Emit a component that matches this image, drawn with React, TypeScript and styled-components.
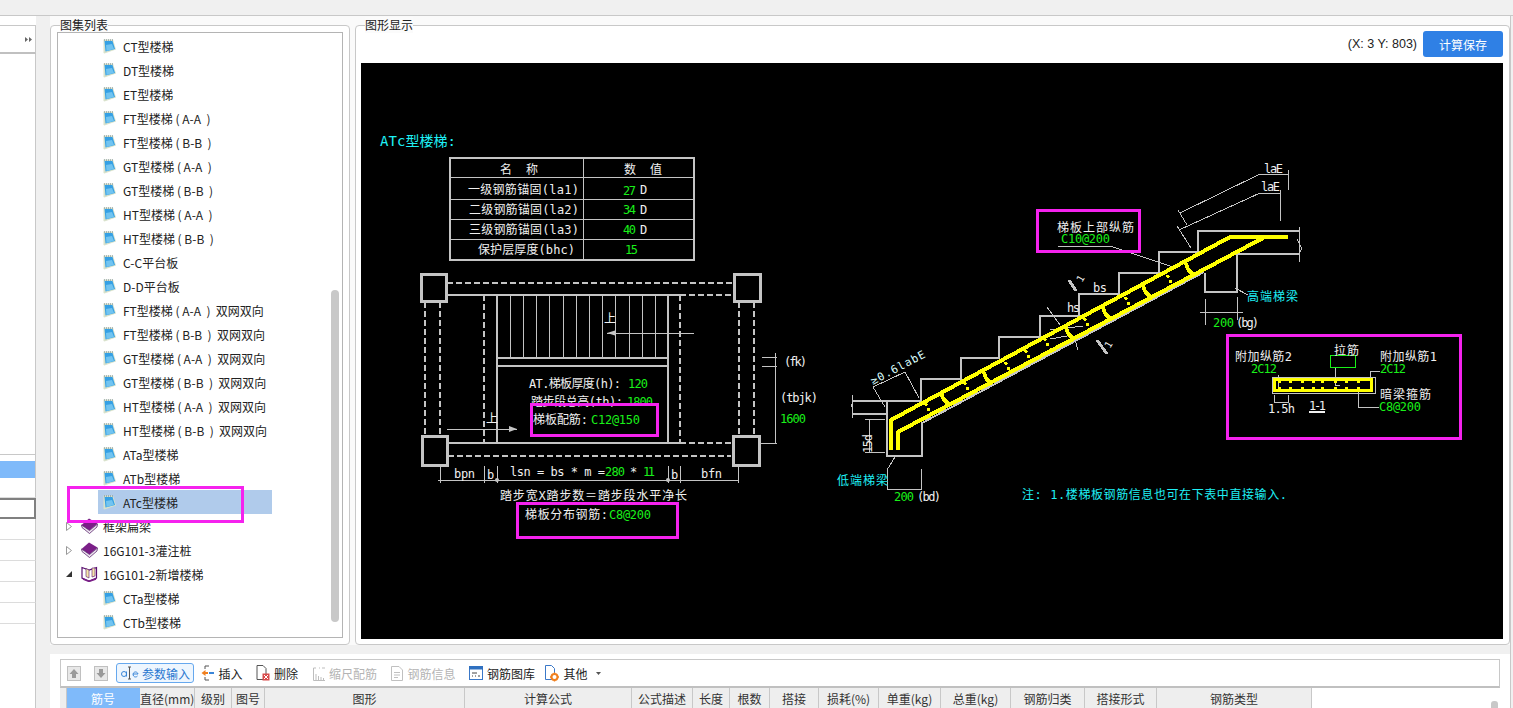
import React from "react";
import styled, { createGlobalStyle } from "styled-components";

const Global = createGlobalStyle`
  html, body { margin: 0; padding: 0; background: #f0f0f0; overflow: hidden; }
  body { font-family: "Noto Sans CJK SC", "Liberation Sans", sans-serif; font-size: 12px; color: #222; }
  #root { height: 708px; }
`;

const Page = styled.div`
  width: 1513px; height: 708px; display: flex; flex-direction: column; overflow: hidden; background: #f0f0f0;
`;
const TopBar = styled.div`
  height: 15px; flex: none; background: #f0f0f0; border-bottom: 1px solid #c8c8c8;
`;
const Body = styled.div`
  flex: 1; display: flex; min-height: 0;
`;
const LeftPane = styled.div`
  width: 36px; flex: none; background: #fff; padding-top: 9px; display: flex; flex-direction: column;
`;
const LeftHead = styled.div`
  height: 26px; flex: none; border-top: 1px solid #c8c8c8; border-right: 1px solid #c8c8c8; border-bottom: 2px solid #c0c0c0;
  display: flex; align-items: center; justify-content: flex-end; padding-right: 3px; box-sizing: content-box;
  background: #fff;
`;
const LeftFill = styled.div`
  height: 400px; flex: none; border-right: 1px solid #c8c8c8; border-bottom: 1px solid #c8c8c8; background: #fff;
`;
const LeftGap = styled.div`
  height: 6px; flex: none; border-right: 1px solid #c8c8c8;
`;
const LeftBlue = styled.div`
  height: 17px; flex: none; background: #7fbafa; border-right: 1px solid #c8c8c8;
`;
const LeftRow = styled.div<{ $h: number }>`
  height: ${(p) => p.$h}px; flex: none; box-sizing: border-box; border-right: 1px solid #c8c8c8; border-bottom: 1px solid #dcdcdc;
`;
const LeftCurrent = styled.div`
  height: 21px; flex: none; box-sizing: border-box; border: 2px solid #808080; border-left: none; margin-right: 0;
`;
const LeftRest = styled.div`
  flex: 1; border-right: 1px solid #c8c8c8;
`;
const Gutter = styled.div`
  width: 14px; flex: none; background: #f0f0f0;
`;
const RightArea = styled.div`
  width: 1460px; flex: none; display: flex; flex-direction: column; border-right: 1px solid #c8c8c8; box-sizing: content-box;
`;
const Panels = styled.div`
  height: 629px; flex: none; display: flex; gap: 5px; padding-top: 9px; box-sizing: border-box; background: #fafafa;
`;
const GroupBox = styled.section<{ $w: number }>`
  position: relative; width: ${(p) => p.$w}px; flex: none; box-sizing: border-box; height: 620px;
  border: 1px solid #c8c8c8; border-radius: 4px; background: #fff;
`;
const GroupTitle = styled.h2`
  position: absolute; left: 9px; top: -9px; margin: 0; font-size: 12px; font-weight: 400; line-height: 16px; color: #222;
  background: #fbfbfb;
`;
const ListFrame = styled.div`
  position: absolute; inset: 6px; border: 1px solid #b4b4b4; overflow: hidden; padding-top: 1px; background: #fff;
`;
const Row = styled.div`
  height: 24px; display: flex; align-items: center; white-space: pre; color: #222;
`;
const LeafItem = styled.div<{ $on?: boolean }>`
  margin-left: 40px; width: 174px; height: 24px; box-sizing: border-box; padding-left: 5px; display: flex; align-items: center; gap: 7px;
  background: ${(p) => (p.$on ? "#b0cbeb" : "transparent")};
`;
const BookItem = styled.div`
  margin-left: 8px; display: flex; align-items: center; height: 24px;
`;
const Arrow = styled.span`
  width: 15px; display: inline-flex; flex: none;
`;
const BookWrap = styled.span`
  width: 22px; display: inline-flex; flex: none;
`;
const ListScroll = styled.div`
  position: absolute; left: 273px; top: 257px; width: 8px; height: 332px; border-radius: 4px; background: #c8c8c8;
`;
const PinkMark = styled.div`
  position: absolute; left: 9px; top: 453px; width: 177px; height: 37px; box-sizing: border-box; border: 3px solid #f522ee;
`;
const GraphHead = styled.div`
  height: 36px; display: flex; align-items: center; justify-content: flex-end; gap: 6px; padding: 0 6px 0 0; box-sizing: border-box;
`;
const Coord = styled.span`
  font-family: "Liberation Sans", sans-serif; font-size: 12.5px; color: #222;
`;
const SaveBtn = styled.button`
  width: 80px; height: 26px; border: none; border-radius: 3px; background: #2f80e5; color: #fff; font: inherit; font-size: 12px; padding: 0;
`;
const Canvas = styled.svg`
  display: block; width: 1142px; height: 576px; margin: 1px 0 0 5px; background: #000;
`;
const Separator = styled.div`
  height: 9px; flex: none; background: #f0f0f0;
`;
const Bottom = styled.div`
  flex: 1; background: #fff; padding: 5px 10px 0 10px; min-height: 0;
`;
const Toolbar = styled.div`
  height: 26px; border: 1px solid #c8c8c8; border-bottom: 2px solid #c0c0c0; display: flex; align-items: center; padding-left: 1px; gap: 3px; background: #fff;
`;
const ToolBtn = styled.div<{ $w: number; $off?: boolean; $active?: boolean }>`
  width: ${(p) => p.$w}px; height: 20px; flex: none; box-sizing: border-box; display: flex; align-items: center; justify-content: center; gap: ${(p) => (p.$active ? 2 : 4)}px;
  color: ${(p) => (p.$active ? "#2a78d0" : p.$off ? "#b4b4b4" : "#222")};
  border: ${(p) => (p.$active ? "1px solid #66a8ee" : "none")}; border-radius: 3px;
  background: ${(p) => (p.$active ? "#eef6fe" : "#fff")};
  white-space: nowrap;
`;
const CaretWrap = styled.span`
  display: inline-flex; margin-left: 4px;
`;
const HeadRow = styled.div`
  display: flex; height: 30px; background: #fff;
`;
const HeadCell = styled.div<{ $w: number; $on?: boolean }>`
  width: ${(p) => p.$w}px; flex: none; box-sizing: border-box; background: ${(p) => (p.$on ? "#7fbafa" : "#eeeeee")}; color: ${(p) => (p.$on ? "#fff" : "#333")};
  border-right: 1px solid ${(p) => (p.$on ? "#7fbafa" : "#c8c8c8")}; text-align: center; line-height: 22px; white-space: nowrap; overflow: hidden;
  font-size: 12px;
`;
const TableScroll = styled.div`
  position: absolute; left: 1491px; top: 701px; width: 7px; height: 12px; border-radius: 3px; background: #c8c8c8;
`;
const CadText = styled.text<{ $c: string; $s: number }>`
  font-family: "DejaVu Sans Mono", "Noto Sans CJK SC", monospace; fill: ${(p) => p.$c}; font-size: ${(p) => p.$s}px;
`;

const W = "#f0f0f0";
const G = "#19f019";
const C = "#1ff0f5";
const GR = "#c4c4c4";
const Y = "#ffff00";
const PK = "#f522ee";

const NoteIcon = () => (
  <svg width="13" height="15" viewBox="0 0 13 15">
    <path d="M0.5 0.5 H10 L13 10.5 L1.5 14.5 L0.5 14 Z" fill="#d9e2cc" />
    <path d="M1.5 2 H9.5 L12 10 L2.5 12.5 Z" fill="#35a0e4" />
    <path d="M3 6 L9 5 L11 10 L3.5 12 Z" fill="#72c4f0" />
    <path d="M1 1 H10" stroke="#6f858f" strokeDasharray="1 1" />
  </svg>
);
const BookIcon = () => (
  <svg width="17" height="16" viewBox="0 0 17 16">
    <path d="M0.5 7 L8 0.5 L16.5 5.5 L8.5 12.5 Z" fill="#7b1f88" />
    <path d="M0.5 7 L1 9.5 L8.5 15.5 L16 9 L16.5 6 L8.5 12.5 Z" fill="#ece4ee" stroke="#4b1160" strokeWidth="0.7" />
  </svg>
);
const OpenBookIcon = () => (
  <svg width="17" height="16" viewBox="0 0 17 16">
    <path d="M1 1.5 L8 4 L15.5 1.5 V12 L8 15 L1 12 Z" fill="#fff" stroke="#5a1070" strokeWidth="1.2" />
    <path d="M5 2.5 L8 4 V12 L5 10.5 Z M11 2 L14 2 V10 L11 11 Z" fill="#f4e8a8" stroke="#5a1070" strokeWidth="0.6" />
    <path d="M2 13 L8 15.5 L15 13" stroke="#7b1f88" fill="none" strokeWidth="1.4" />
  </svg>
);
const TriOpen = () => (
  <svg width="6" height="9" viewBox="0 0 6 9"><path d="M0.5 0.5 L5.5 4.5 L0.5 8.5 Z" fill="#fff" stroke="#999" /></svg>
);
const TriDown = () => (
  <svg width="6" height="6" viewBox="0 0 6 6"><path d="M6 0 V6 H0 Z" fill="#333" /></svg>
);

const leaves = [
  "CT型楼梯", "DT型楼梯", "ET型楼梯", "FT型楼梯 ( A-A  )", "FT型楼梯 ( B-B  )", "GT型楼梯 ( A-A  )", "GT型楼梯 ( B-B  )",
  "HT型楼梯 ( A-A  )", "HT型楼梯 ( B-B  )", "C-C平台板", "D-D平台板", "FT型楼梯 ( A-A  )  双网双向", "FT型楼梯 ( B-B  )  双网双向",
  "GT型楼梯 ( A-A  )  双网双向", "GT型楼梯 ( B-B  )  双网双向", "HT型楼梯 ( A-A  )  双网双向", "HT型楼梯 ( B-B  )  双网双向", "ATa型楼梯", "ATb型楼梯",
];

const columns: [string, number][] = [
  ["", 7], ["筋号", 73], ["直径(mm)", 55], ["级别", 37], ["图号", 33], ["图形", 200], ["计算公式", 167], ["公式描述", 61],
  ["长度", 37], ["根数", 40], ["搭接", 49], ["损耗(%)", 60], ["单重(kg)", 62], ["总重(kg)", 70], ["钢筋归类", 74], ["搭接形式", 72], ["钢筋类型", 155],
];

type L = [number, number, number, string, string?, number?];
const labels: L[] = [
  [380, 146, 76, "ATc型楼梯:", C, 14],
  [500, 174, 38, "名  称"], [624, 174, 38, "数  值"],
  [468, 194, 111, "一级钢筋锚固(la1)"], [469, 214, 110, "二级钢筋锚固(la2)"], [469, 234, 110, "三级钢筋锚固(la3)"], [478, 254, 97, "保护层厚度(bhc)"],
  [623, 195, 13, "27", G], [640, 194, 6, "D"], [623, 214, 13, "34", G], [640, 214, 6, "D"], [623, 234, 13, "40", G], [640, 234, 6, "D"], [625, 254, 13, "15", G],
  [604, 323, 12, "上"], [486, 423, 11, "上"],
  [529, 388, 92, "AT.梯板厚度(h):"], [628, 388, 20, "120", G],
  [531, 406, 92, "踏步段总高(th):"], [627, 406, 26, "1800", G],
  [533, 424, 55, "梯板配筋:"], [591, 424, 49, "C12@150", G],
  [784, 366, 23, "(fk)"], [780, 402, 38, "(tbjk)"], [780, 423, 26, "1600", G],
  [454, 478, 21, "bpn"], [487, 479, 6, "b"], [510, 476, 95, "lsn = bs * m ="], [605, 476, 20, "280", G], [630, 476, 6, "*"], [643, 476, 12, "11", G],
  [671, 479, 6, "b"], [701, 478, 21, "bfn"],
  [500, 500, 187, "踏步宽X踏步数＝踏步段水平净长"],
  [525, 519, 83, "梯板分布钢筋:"], [609, 519, 42, "C8@200", G],
  [1264, 173, 19, "laE"], [1261, 191, 19, "laE"],
  [1057, 232, 77, "梯板上部纵筋"], [1061, 243, 49, "C10@200", G],
  [1093, 292, 14, "bs"], [1067, 312, 13, "hs"],
  [1247, 301, 51, "高端梯梁", C], [1213, 327, 21, "200", G], [1236, 327, 23, "(bg)"],
  [837, 485, 51, "低端梯梁", C], [894, 501, 20, "200", G], [917, 501, 24, "(bd)"],
  [1022, 499, 265, "注: 1.楼梯板钢筋信息也可在下表中直接输入.", C],
  [1235, 361, 57, "附加纵筋2"], [1251, 373, 26, "2C12", G], [1334, 355, 25, "拉筋"], [1380, 361, 57, "附加纵筋1"], [1380, 373, 26, "2C12", G],
  [1380, 399, 51, "暗梁箍筋"], [1379, 411, 42, "C8@200", G], [1268, 413, 27, "1.5h"], [1309, 410, 17, "1-1"],
];

const thin: string[] = [
  "M1180 213 L1260 174 H1288", "M1288 170 V190", "M1178 210 L1187 225", "M1179 230 L1260 193 H1280", "M1280 190 V221", "M1177 226 L1191 248",
  "M1058 246 H1110 L1173 267", "M1235 288 L1248 295", "M1200 312 H1243", "M1205 299 V325", "M1237 297 V320",
  "M1299 227 V262", "M1297 239 L1302 249 L1299 253",
  "M873 387 L905 372", "M873 387 L885 407", "M905 372 L919 398", "M869 419 V452", "M865 419 H885", "M865 452 H885", "M852 395 V418", "M851 404 L853 409",
  "M887 470 L895 457", "M887 489 H922", "M887 470 V490", "M921 469 V490",
  "M1047 307 L1060 325", "M1050 330 L1083 326", "M1050 339 L1073 335", "M1075 340 L1078 350",
  "M438 480 H738", "M440 466 V483", "M484 466 V483", "M497 466 V483", "M668 466 V483", "M680 466 V483", "M738 466 V483",
  "M607 333 H694", "M447 429 H517", "M775 353 V443", "M762 357 H777", "M762 366 H777", "M760 443 H777",
];

const gray: string[] = [
  "M852 401 H921 V379 H961 V358 H999 V337 H1040 V316 H1079 V294 H1119 V273 H1159 V252 H1198 V231 H1299",
  "M1299 254 H1237 V292 H1205 V273", "M1204 272 L922 423 V456 H887 V401", "M852 414 H887",
];

const hooks: [number, number][] = [[945, 397], [988, 377], [1070, 332], [1107, 312], [1147, 290], [1190, 268]];
const ties: [number, number][] = [[928, 408], [967, 387], [1008, 367], [1028, 355], [1047, 343], [1087, 323], [1128, 302], [1170, 280]];
const treads = Array.from({ length: 13 }, (_, i) => 497 + i * 13.2);
const barTicks = [1279, 1290, 1302, 1313, 1322, 1335, 1346, 1358];

const Drawing = () => (
  <Canvas viewBox="361 63 1142 576" xmlns="http://www.w3.org/2000/svg">
    <g fill="none" stroke={GR} shapeRendering="crispEdges">
      <rect x="449.5" y="157.5" width="244" height="102" strokeWidth="2" />
      <path d="M583.5 157 V260 M449 177.5 H694 M449 199.5 H694 M449 219.5 H694 M449 239.5 H694" />
      <g strokeWidth="3">
        <rect x="421" y="274" width="25" height="27" /><rect x="734" y="274" width="26" height="27" />
        <rect x="422" y="436" width="25" height="29" /><rect x="733" y="436" width="26" height="29" />
      </g>
      <g strokeWidth="2" strokeDasharray="6 3">
        <path d="M447 283 H733 M680 295 H733 M680 443 H731 M448 456 H731 M425 302 V435 M440 302 V435 M739 302 V435 M754 302 V435 M484 295 V443 M680 295 V443" />
      </g>
      <path strokeWidth="2" d="M447 295 H680 M497 295 V443 M668 295 V443 M497 358 H668 M497 366 H668 M448 443 H680" />
      {treads.map((x) => <path key={x} d={`M${x} 295 V358`} />)}
      {thin.map((d) => <path key={d} d={d} />)}
      {gray.map((d) => <path key={d} d={d} strokeWidth="2" />)}
      <path strokeWidth="3" d="M1069 280 L1076 291 M1097 340 L1107 354" />
      <rect x="1272.5" y="377.5" width="103" height="16" />
      <path d="M1335 368 V385 H1340 M1370 377 V371 H1380 M1358 387 V407 H1379 M1278 375 V388 M1274 395 V402 H1288 V395" />
    </g>
    <g fill={GR}>
      <path d="M607 333 L615 330.5 V335.5 Z M517 429 L509 426 V432 Z" />
      <circle cx="497" cy="480" r="2" /><circle cx="668" cy="480" r="2" />
    </g>
    <g fill="none" stroke={Y} shapeRendering="crispEdges">
      <path strokeWidth="4" d="M891 450 V420 L1230 237 H1288" />
      <path strokeWidth="4" d="M898 450 V432 L1263 238" />
      {hooks.map(([x, y]) => (
        <path key={x} strokeWidth="4" d={`M${x - 4} ${y - 5} Q${x - 3} ${y + 3} ${x + 4} ${y + 7}`} />
      ))}
      {ties.map(([x, y]) => (
        <path key={x} strokeWidth="3" strokeDasharray="3 3" d={`M${x - 3} ${y - 5} L${x + 3} ${y + 6}`} />
      ))}
      <rect x="1274.5" y="379.5" width="97" height="11" strokeWidth="3" />
      {barTicks.map((x) => <path key={x} strokeWidth="3" d={`M${x} 381 V383 M${x} 387 V389`} />)}
    </g>
    <rect x="1330.5" y="355.5" width="25" height="12" fill="none" stroke={G} shapeRendering="crispEdges" />
    <rect x="1309" y="411" width="16" height="2" fill={W} />

    {labels.map(([x, y, w, t, c, s]) => (
      <CadText key={`${x}-${y}-${t}`} x={x} y={y} textLength={w} lengthAdjust="spacing" $c={c ?? W} $s={s ?? 12}>{t}</CadText>
    ))}
    <CadText x="0" y="0" textLength="60" transform="translate(873 385) rotate(-28)" $c="#dff" $s={11}>{"≥0.6labE"}</CadText>
    <CadText x="0" y="0" textLength="19" transform="translate(872 453) rotate(-90)" $c={W} $s={12}>15d</CadText>
    <CadText x="0" y="0" textLength="6" transform="translate(1082 283) rotate(-60)" $c={W} $s={10}>1</CadText>
    <CadText x="0" y="0" textLength="6" transform="translate(1110 349) rotate(-60)" $c={W} $s={10}>1</CadText>

    <g fill="none" stroke={PK} strokeWidth="3" shapeRendering="crispEdges">
      <rect x="531.5" y="404.5" width="126" height="31" />
      <rect x="517" y="503.5" width="160" height="34" />
      <rect x="1037.5" y="210.5" width="102" height="41" />
      <rect x="1227.5" y="335.5" width="233" height="103" />
    </g>
  </Canvas>
);

const UpIcon = ({ down }: { down?: boolean }) => (
  <svg width="14" height="15" viewBox="0 0 14 15">
    <rect x="0.5" y="0.5" width="13" height="14" fill="#e8e8e8" stroke="#c0c0c0" />
    <path d={down ? "M7 12 L2.5 7 H5 V3 H9 V7 H11.5 Z" : "M7 3 L2.5 8 H5 V12 H9 V8 H11.5 Z"} fill="#9a9a9a" />
  </svg>
);
const ParamIcon = () => (
  <svg width="20" height="14" viewBox="0 0 20 14">
    <path d="M9.5 1 V13 M8 1 H11 M8 13 H11" stroke="#555" fill="none" />
    <circle cx="4" cy="8" r="2.5" fill="none" stroke="#3a86d8" />
    <path d="M6.5 5.5 V10.5" stroke="#3a86d8" />
    <path d="M13 8 H18 A2.5 2.5 0 1 0 17.5 10" fill="none" stroke="#3a86d8" />
  </svg>
);
const InsertIcon = () => (
  <svg width="13" height="16" viewBox="0 0 13 16">
    <path d="M4 1 H8 M4 15 H8 M4 1 V4 M4 12 V15" stroke="#555" fill="none" />
    <path d="M0.5 8 L4.5 5 V7 H7 V9 H4.5 V11 Z" fill="#f08020" />
    <rect x="8" y="7" width="5" height="2" fill="#3a86d8" />
  </svg>
);
const DeleteIcon = () => (
  <svg width="14" height="16" viewBox="0 0 14 16">
    <path d="M1 0.5 H7 L10 3.5 V14.5 H1 Z" fill="#fff" stroke="#555" />
    <rect x="6.5" y="8.5" width="7" height="7" fill="#d84a4a" />
    <path d="M8 10 L12 14 M12 10 L8 14" stroke="#fff" />
  </svg>
);
const ScaleIcon = () => (
  <svg width="12" height="15" viewBox="0 0 12 15">
    <path d="M0.5 2 V14.5 H12 M0.5 2 L3 2 M9 2 H12 M6 2 H7 M3 14 V8 M5.5 14 V10 M8 14 V11 M10.5 14 V12" stroke="#bdbdbd" fill="none" />
  </svg>
);
const InfoIcon = () => (
  <svg width="12" height="15" viewBox="0 0 12 15">
    <path d="M0.5 0.5 H8 L11.5 4 V14.5 H0.5 Z M3 6.5 H9 M3 9 H9 M3 11.5 H7" stroke="#c0c0c0" fill="#fff" />
  </svg>
);
const LibIcon = () => (
  <svg width="14" height="14" viewBox="0 0 14 14">
    <rect x="0.5" y="0.5" width="13" height="13" fill="#fff" stroke="#3a78c8" />
    <rect x="0" y="0" width="14" height="3.5" fill="#2f70c0" />
    <path d="M3 7 H8 M3 10 H4 M6 10 H7 M9 10 H11" stroke="#444" />
  </svg>
);
const OtherIcon = () => (
  <svg width="14" height="17" viewBox="0 0 14 17">
    <path d="M0.5 0.5 H6.5 L9.5 3.5 V14.5 H0.5 Z" fill="#fff" stroke="#3a78c8" />
    <circle cx="9.5" cy="12" r="3" fill="#fff" stroke="#f08020" strokeWidth="2" />
    <path d="M9.5 7.5 V9 M9.5 15 V16.5 M5 12 H6.5 M12.5 12 H14" stroke="#f08020" strokeWidth="1.4" />
  </svg>
);
const Caret = () => (
  <CaretWrap><svg width="5" height="3" viewBox="0 0 5 3"><path d="M0 0 H5 L2.5 3 Z" fill="#555" /></svg></CaretWrap>
);
const DoubleArrow = () => (
  <svg width="7" height="5" viewBox="0 0 7 5"><path d="M0 0 L3 2.5 L0 5 Z M4 0 L7 2.5 L4 5 Z" fill="#666" /></svg>
);

export default function App() {
  return (
    <Page>
      <Global />
      <TopBar />
      <Body>
        <LeftPane>
          <LeftHead><DoubleArrow /></LeftHead>
          <LeftFill />
          <LeftGap />
          <LeftBlue />
          <LeftRow $h={20} />
          <LeftCurrent />
          <LeftRow $h={21} />
          <LeftRow $h={21} />
          <LeftRow $h={21} />
          <LeftRow $h={21} />
          <LeftRow $h={21} />
          <LeftRest />
        </LeftPane>
        <Gutter />
        <RightArea>
          <Panels>
            <GroupBox $w={300}>
              <GroupTitle>图集列表</GroupTitle>
              <ListFrame>
                {leaves.map((t, i) => (
                  <Row key={i}><LeafItem><NoteIcon /><span>{t}</span></LeafItem></Row>
                ))}
                <Row><LeafItem $on><NoteIcon /><span>ATc型楼梯</span></LeafItem></Row>
                <Row><BookItem><Arrow><TriOpen /></Arrow><BookWrap><BookIcon /></BookWrap><span>框架扁梁</span></BookItem></Row>
                <Row><BookItem><Arrow><TriOpen /></Arrow><BookWrap><BookIcon /></BookWrap><span>16G101-3灌注桩</span></BookItem></Row>
                <Row><BookItem><Arrow><TriDown /></Arrow><BookWrap><OpenBookIcon /></BookWrap><span>16G101-2新增楼梯</span></BookItem></Row>
                <Row><LeafItem><NoteIcon /><span>CTa型楼梯</span></LeafItem></Row>
                <Row><LeafItem><NoteIcon /><span>CTb型楼梯</span></LeafItem></Row>
                <ListScroll />
                <PinkMark />
              </ListFrame>
            </GroupBox>
            <GroupBox $w={1155}>
              <GroupTitle>图形显示</GroupTitle>
              <GraphHead>
                <Coord>(X: 3 Y: 803)</Coord>
                <SaveBtn>计算保存</SaveBtn>
              </GraphHead>
              <Drawing />
            </GroupBox>
          </Panels>
          <Separator />
          <Bottom>
            <Toolbar>
              <ToolBtn $w={24}><UpIcon /></ToolBtn>
              <ToolBtn $w={24}><UpIcon down /></ToolBtn>
              <ToolBtn $w={78} $active><ParamIcon /><span>参数输入</span></ToolBtn>
              <ToolBtn $w={50}><InsertIcon /><span>插入</span></ToolBtn>
              <ToolBtn $w={54}><DeleteIcon /><span>删除</span></ToolBtn>
              <ToolBtn $w={76} $off><ScaleIcon /><span>缩尺配筋</span></ToolBtn>
              <ToolBtn $w={75} $off><InfoIcon /><span>钢筋信息</span></ToolBtn>
              <ToolBtn $w={76}><LibIcon /><span>钢筋图库</span></ToolBtn>
              <ToolBtn $w={60}><OtherIcon /><span>其他</span><Caret /></ToolBtn>
            </Toolbar>
            <HeadRow>
              {columns.map(([t, w], i) => (
                <HeadCell key={i} $w={w} $on={i === 1}>{t}</HeadCell>
              ))}
            </HeadRow>
            <TableScroll />
          </Bottom>
        </RightArea>
      </Body>
    </Page>
  );
}
